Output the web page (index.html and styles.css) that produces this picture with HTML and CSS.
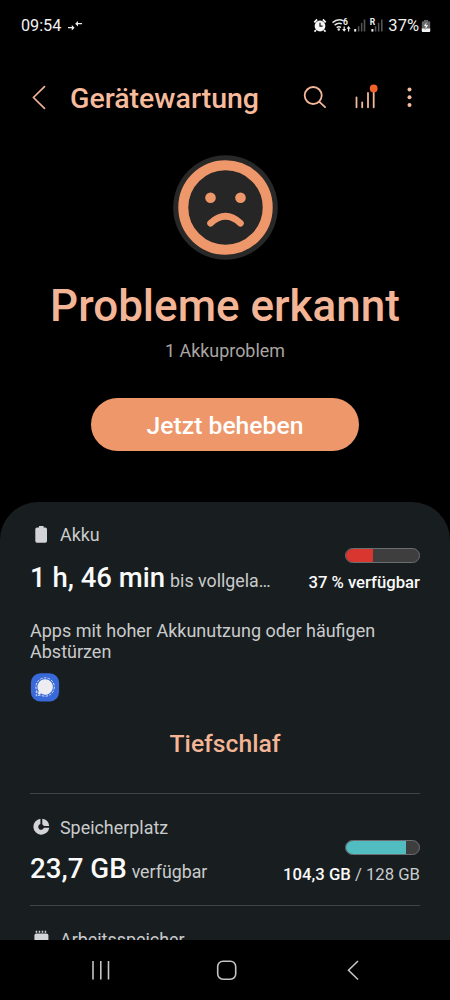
FILE: index.html
```html
<!DOCTYPE html>
<html lang="de">
<head>
<meta charset="utf-8">
<title>Gerätewartung</title>
<link rel="stylesheet" href="styles.css">
</head>
<body>
<div class="screen">
  <div class="status">
    <span class="clock">09:54</span>
    <svg class="swap" width="16" height="12" viewBox="0 0 16 12"><path d="M1 7.700h5M15 3.600H10" stroke="#eee" stroke-width="1.300"/><path d="M4.800 4.900 7.600 7.700 4.800 10.500zM11 .9 8.200 3.700 11 6.500z" fill="#eee"/></svg>
    <svg class="indicators" width="70" height="18" viewBox="312 17 70 18">
      <circle cx="319" cy="26" r="5.400" fill="#f4f4f4"/>
      <path d="M313.300 22.300l2.800-2.800M324.700 22.300l-2.800-2.800M315 30l-1.500 1.600M323 30l1.500 1.600" stroke="#f4f4f4" stroke-width="1.800"/>
      <path d="M319 22.800v3.400h2.600" fill="none" stroke="#111" stroke-width="1.200"/>
      <g fill="none" stroke="#e4e4e4" stroke-width="1.500"><path d="M331.500 22.600q5.300-4.700 11-1.800M333.600 25.100q3.400-2.900 7.200-1.300M335.700 27.600q1.900-1.500 4.300-.3"/></g>
      <circle cx="337.800" cy="29.500" r="1.200" fill="#e4e4e4"/>
      <text x="342" y="25.400" class="tiny">6</text>
      <path d="M343.200 26.500v4M347.600 31.500v-4" stroke="#eee" stroke-width="1.200"/><path d="M341.200 29h4l-2 2.800zM345.600 28.800h4l-2-2.800z" fill="#eee"/>
      <path d="M353.200 29h2v2.600h-2z" fill="#eee"/><path d="M356.900 26.300h1.500v5.300h-1.500zM359.900 22.900h1.500v8.700h-1.500zM362.700 19.400h1.600v12.200h-1.600z" fill="#555"/>
      <text x="368.700" y="24.800" class="tiny">R</text>
      <path d="M370.400 29h2v2.600h-2z" fill="#eee"/><path d="M373.800 26.300h1.500v5.300h-1.500zM376.900 22.900h1.500v8.700h-1.500zM380 19.400h1.600v12.200H380z" fill="#555"/>
    </svg>
    <span class="percent">37%</span>
    <svg class="charge" width="10" height="14" viewBox="0 0 10 14"><path d="M3 1h4v1.200h1.200q1 0 1 1V12q0 1-1 1H1.800q-1 0-1-1V3.200q0-1 1-1H3z" fill="#666"/><path d="M.8 9.500h8.400V12q0 1-1 1H1.800q-1 0-1-1z" fill="#f4f4f4"/><path d="M5.800 2.800 2.500 7.300h2.100l-.6 3.500 3.500-4.700H5.300z" fill="#fff" stroke="#444" stroke-width=".3"/></svg>
  </div>

  <header class="header">
    <svg class="back" width="14" height="26" viewBox="0 0 14 26"><path d="M12.500 1.600 1.400 12.500l11.100 10.900" fill="none" stroke="#f3b393" stroke-width="1.700" stroke-linecap="round" stroke-linejoin="round"/></svg>
    <h1 class="title">Gerätewartung</h1>
    <svg class="tools" width="110" height="30" viewBox="302 82.500 110 30">
      <g fill="none" stroke="#f3b799" stroke-width="1.800" stroke-linecap="round"><circle cx="313.200" cy="95" r="8.500"/><path d="M319.400 101.300l5.700 5.300"/><path d="M356.500 97v9.800M362.200 102v4.800M368 92.500v14.300M373.700 89v17.800"/></g>
      <circle cx="373.700" cy="88" r="3.900" fill="#f2622a"/>
      <g fill="#f6bd9f"><circle cx="409.500" cy="88.900" r="2"/><circle cx="409.500" cy="96.700" r="2"/><circle cx="409.500" cy="104.500" r="2"/></g>
    </svg>
  </header>

  <section class="summary">
    <svg class="face" width="105" height="105" viewBox="0 0 105 105"><circle cx="52.500" cy="52.500" r="52.300" fill="#282828"/><circle cx="52.500" cy="52.500" r="42.200" fill="#262626" stroke="#ed976a" stroke-width="10"/><g fill="#ed976a"><circle cx="37.500" cy="42.700" r="5.300"/><circle cx="67.500" cy="42.700" r="5.300"/></g><path d="M37.500 68.200q15-13.800 30 0" fill="none" stroke="#ed976a" stroke-width="6.600" stroke-linecap="round"/></svg>
    <h2 class="verdict">Probleme erkannt</h2>
    <p class="detail">1 Akkuproblem</p>
    <button class="fix">Jetzt beheben</button>
  </section>

  <main class="card">
    <section class="battery">
      <div class="info">
        <div class="reading">
          <div class="label"><svg width="30" height="20" viewBox="0 0 30 20"><path d="M9 1h4.600v1.600h1.700q1.700 0 1.700 1.700v11.700q0 1.700-1.700 1.700H7q-1.700 0-1.700-1.700V4.300Q5.300 2.600 7 2.600h2z" fill="#d2d4d5"/></svg><span>Akku</span></div>
          <div class="value"><b class="time">1 h, 46 min</b><span class="unit">bis vollgela…</span></div>
        </div>
        <div class="usage">
          <div class="meter"><div class="fill red" style="width:37%"></div></div>
          <div class="amount"><b>37 % verfügbar</b></div>
        </div>
      </div>
      <p class="apps">Apps mit hoher Akkunutzung oder häufigen<br>Abstürzen</p>
      <svg class="signal" width="30" height="30" viewBox="0 0 30 30"><rect x=".9" y=".3" width="28.200" height="28.200" rx="9.500" fill="#3969d8"/><circle cx="15.100" cy="14" r="9.200" fill="none" stroke="#d9e3f7" stroke-width="1" stroke-dasharray="2.500 1.300"/><path d="M6.300 18v4.800l4.200-.8" fill="none" stroke="#d9e3f7" stroke-width="1" stroke-dasharray="2.200 1"/><path d="M15.100 6.300a7.700 7.700 0 1 1-3.900 14.300l-3.400.8.900-3.300A7.700 7.700 0 0 1 15.100 6.300z" fill="#ededf1"/></svg>
      <div class="sleep">Tiefschlaf</div>
    </section>
    <section class="storage">
      <div class="info">
        <div class="reading">
          <div class="label"><svg width="30" height="20" viewBox="0 0 30 20"><path d="M10.400.7a8 8 0 1 0 8.900 9.100h-5.400a2.900 2.900 0 1 1-3.500-3.700z" fill="#d2d4d5"/><path d="M12.300.8a8 8 0 0 1 6.900 7.100h-5.400a2.900 2.900 0 0 0-1.500-1.500z" fill="#d2d4d5"/></svg><span>Speicherplatz</span></div>
          <div class="value"><b class="size">23,7 GB</b><span class="unit">verfügbar</span></div>
        </div>
        <div class="usage">
          <div class="meter"><div class="fill teal" style="width:82%"></div></div>
          <div class="amount"><b>104,3 GB</b> / 128 GB</div>
        </div>
      </div>
    </section>
    <section class="memory">
      <div class="label"><svg width="30" height="20" viewBox="0 0 30 20"><path d="M5.700.8h1.500v2H5.700zm3 0h1.500v2H8.700zm3 0h1.500v2h-1.500zm3 0h1.500v2h-1.500z" fill="#d2d4d5"/><rect x="4.400" y="3.600" width="14" height="13" rx="2" fill="#d2d4d5"/></svg><span>Arbeitsspeicher</span></div>
    </section>
  </main>

  <nav class="nav">
    <svg width="270" height="22" viewBox="90 959 270 22" fill="none" stroke="#c4c4c4" stroke-width="1.600"><path d="M93 961v18.500M100.800 961v18.500M108.500 961v18.500"/><rect x="217.700" y="961.200" width="18" height="18" rx="5.200"/><path d="M358 961 348.500 970.200l9.500 9.300"/></svg>
  </nav>
</div>
</body>
</html>
```
FILE: styles.css
```css
* { box-sizing: border-box; }
body, h1, h2, p { margin: 0; }
body { background: #000; font-family: Roboto, sans-serif; color: #c9cbcc; }
b { font-weight: 500; color: #fafafa; }

.screen { width: 450px; height: 1000px; display: flex; flex-direction: column; overflow: hidden; }

.status { height: 51px; flex: none; display: flex; align-items: center; padding: 0 19px 0 21px; color: #f2f2f2; font-size: 16.200px; }
.swap { margin-left: 6px; }
.indicators { margin-left: auto; }
.percent { margin-left: 5px; font-size: 16.500px; }
.charge { margin-left: 2px; }
.tiny { font: 700 8.500px Roboto, sans-serif; fill: #eee; }

.header { height: 93px; flex: none; display: flex; align-items: center; padding: 0 38px 0 32px; }
.title { margin-left: 24px; padding-top: 2px; font-size: 28.500px; line-height: 32px; font-weight: 500; color: #f6ba9c; }
.tools { margin-left: auto; }

.summary { height: 358px; flex: none; display: flex; flex-direction: column; align-items: center; padding-top: 11px; }
.face { flex: none; }
.verdict { margin-top: 20px; font-size: 44px; line-height: 52px; font-weight: 500; color: #f3b596; white-space: nowrap; }
.detail { margin-top: 7px; font-size: 17.900px; line-height: 24px; color: #aaa5a2; }
.fix { margin-top: 35px; width: 268px; height: 53px; padding: 2px 0 0; border: 0; border-radius: 27px; background: #ed976a; color: #fff; font: 500 24.700px Roboto, sans-serif; }

.card { flex: 1; min-height: 0; overflow: hidden; padding: 0 30px; background: #181d1f; border-radius: 38px 38px 0 0; }
.battery { height: 292px; padding-top: 21px; border-bottom: 1px solid #404446; }
.storage { height: 112px; padding-top: 22px; border-bottom: 1px solid #404446; }
.memory { padding-top: 22px; }
.info { display: flex; justify-content: space-between; height: 81px; }
.label { display: flex; align-items: center; height: 24px; font-size: 17.900px; }
.label span { padding-bottom: 2px; }
.value { display: flex; align-items: baseline; height: 36px; margin-top: 12px; line-height: 37px; white-space: nowrap; }
.storage .value { margin-top: 10px; }
.time { font-size: 27.500px; }
.size { font-size: 27.700px; }
.unit { margin-left: 5px; font-size: 17.800px; }
.usage { display: flex; flex-direction: column; align-items: flex-end; padding-top: 25px; }
.meter { width: 75px; height: 15px; border: 1px solid #6b6e70; border-radius: 8px; background: #3e3e3f; overflow: hidden; }
.fill { height: 100%; }
.red { background: #d9362f; }
.teal { background: #51bdc0; }
.amount { margin-top: 8px; font-size: 16.700px; line-height: 24px; white-space: nowrap; }
.storage .usage { padding-top: 24px; }
.apps { margin-top: 16px; font-size: 18px; line-height: 21px; white-space: nowrap; }
.signal { display: block; margin-top: 11px; }
.sleep { margin-top: 25px; text-align: center; font-size: 24.700px; line-height: 32px; font-weight: 500; color: #f3b596; }

.nav { height: 60px; flex: none; display: flex; align-items: center; padding-left: 90px; background: #000; }
```
